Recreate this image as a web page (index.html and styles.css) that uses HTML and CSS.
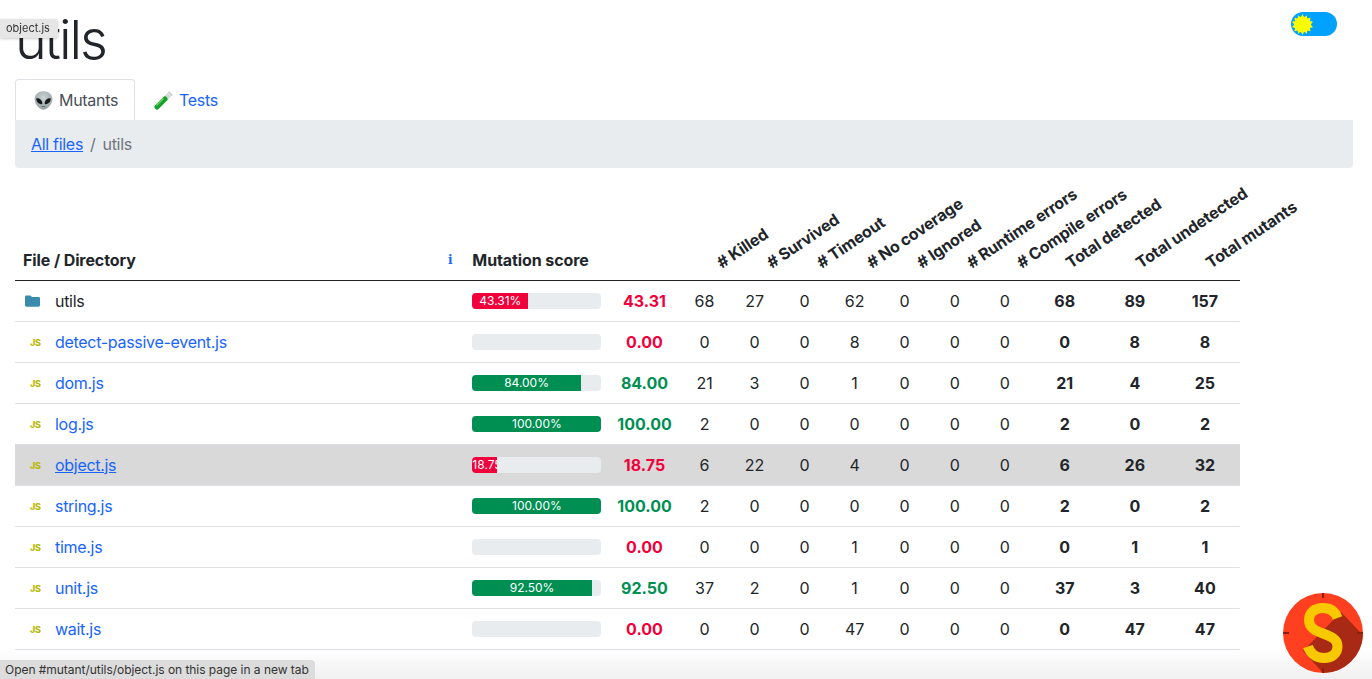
FILE: index.html
```html
<!DOCTYPE html>
<html lang="en">
<head>
<meta charset="utf-8">
<title>utils</title>
<link rel="stylesheet" href="styles.css">
</head>
<body>
<div class="page">
  <header class="top">
    <h1 class="title">utils</h1>
    <div class="toggle">
      <svg class="sun" viewBox="0 0 22 22"><polygon fill="#ffff00" points="11,0 12.8,3.6 15.5,1.2 16,4.8 19.5,3.8 18.6,7.3 22,8 19.6,11 22,14 18.6,14.7 19.5,18.2 16,17.2 15.5,20.8 12.8,18.4 11,22 9.2,18.4 6.5,20.8 6,17.2 2.500,18.2 3.400,14.7 0,14 2.400,11 0,8 3.400,7.300 2.500,3.800 6,4.800 6.500,1.200 9.200,3.600"/><circle cx="11" cy="11" r="8.300" fill="#ffff00"/></svg>
    </div>
  </header>
  <nav class="tabs">
    <a class="tab tab-active">
      <svg class="emoji" viewBox="0 0 18 18"><defs><radialGradient id="head" cx=".5" cy=".35" r=".7"><stop offset="0" stop-color="#cdd3d3"/><stop offset="1" stop-color="#8f9a9c"/></radialGradient></defs><path fill="url(#head)" d="M9 .3c4.800 0 8.400 3.100 8.400 7.400 0 4.500-4.900 10-8.400 10S.6 12.200.6 7.700C.6 3.400 4.200.3 9 .3z"/><path fill="#15181b" d="M2.300 6.900c2.500-.5 5.300 1.500 5.600 4.400.1.800-.4 1.200-1.100 1.200C4.100 12.500 1.700 9.400 2.300 6.900zM15.700 6.900c-2.500-.5-5.300 1.500-5.600 4.400-.1.800.4 1.200 1.100 1.200 2.700 0 5.100-3.100 4.500-5.600z"/><path fill="#4c5457" d="M7.200 14.400h3.600v.7H7.200z"/></svg>
      <span>Mutants</span>
    </a>
    <a class="tab">
      <svg class="emoji" viewBox="0 0 19 19"><path stroke="#d5dcd8" stroke-width="5" stroke-linecap="butt" fill="none" d="M10 9L15.500 3.500"/><path stroke="#14a329" stroke-width="5" stroke-linecap="round" fill="none" d="M3 16L11 8"/><path stroke="#6fd06a" stroke-width="1.300" fill="none" d="M2.500 14.500L9.500 7.500"/><path stroke="#b9c4bf" stroke-width="1.500" fill="none" d="M14.500 .8L18.200 4.500"/></svg>
      <span>Tests</span>
    </a>
  </nav>
  <div class="crumbs"><a class="crumb-link">All files</a><span class="crumb-sep">/</span><span class="crumb-now">utils</span></div>
  <table class="report">
    <colgroup>
      <col class="c-icon"><col class="c-name"><col class="c-info"><col class="c-bar"><col class="c-score">
      <col class="c-n"><col class="c-n"><col class="c-n"><col class="c-n"><col class="c-n"><col class="c-n"><col class="c-n">
      <col class="c-t"><col class="c-t"><col class="c-t">
    </colgroup>
    <thead>
      <tr>
        <th colspan="2" class="h-left">File / Directory</th>
        <th class="h-info"><span class="info">i</span></th>
        <th colspan="2" class="h-left">Mutation score</th>
        <th class="rot"><span># Killed</span></th>
        <th class="rot"><span># Survived</span></th>
        <th class="rot"><span># Timeout</span></th>
        <th class="rot"><span># No coverage</span></th>
        <th class="rot"><span># Ignored</span></th>
        <th class="rot"><span># Runtime errors</span></th>
        <th class="rot"><span># Compile errors</span></th>
        <th class="rot rot-t"><span>Total detected</span></th>
        <th class="rot rot-t"><span>Total undetected</span></th>
        <th class="rot rot-t"><span>Total mutants</span></th>
      </tr>
    </thead>
    <tbody>
      <tr>
        <td class="ic"><svg class="folder" viewBox="0 0 16 14"><path fill="#3a8bad" d="M1.500 1h4.300l1.700 1.800h7c.8 0 1.500.7 1.500 1.500v7.200c0 .8-.7 1.500-1.500 1.500h-13C.7 13 0 12.300 0 11.500v-9C0 1.700.7 1 1.500 1z"/></svg></td>
        <td colspan="2" class="name">utils</td>
        <td><div class="bar"><div class="fill red" style="width:43.31%">43.31%</div></div></td>
        <td class="score red-t">43.31</td>
        <td>68</td><td>27</td><td>0</td><td>62</td><td>0</td><td>0</td><td>0</td>
        <td class="b">68</td><td class="b">89</td><td class="b">157</td>
      </tr>
      <tr>
        <td class="ic"><span class="js">JS</span></td>
        <td colspan="2" class="name"><a>detect-passive-event.js</a></td>
        <td><div class="bar"></div></td>
        <td class="score red-t">0.00</td>
        <td>0</td><td>0</td><td>0</td><td>8</td><td>0</td><td>0</td><td>0</td>
        <td class="b">0</td><td class="b">8</td><td class="b">8</td>
      </tr>
      <tr>
        <td class="ic"><span class="js">JS</span></td>
        <td colspan="2" class="name"><a>dom.js</a></td>
        <td><div class="bar"><div class="fill green" style="width:84%">84.00%</div></div></td>
        <td class="score green-t">84.00</td>
        <td>21</td><td>3</td><td>0</td><td>1</td><td>0</td><td>0</td><td>0</td>
        <td class="b">21</td><td class="b">4</td><td class="b">25</td>
      </tr>
      <tr>
        <td class="ic"><span class="js">JS</span></td>
        <td colspan="2" class="name"><a>log.js</a></td>
        <td><div class="bar"><div class="fill green" style="width:100%">100.00%</div></div></td>
        <td class="score green-t">100.00</td>
        <td>2</td><td>0</td><td>0</td><td>0</td><td>0</td><td>0</td><td>0</td>
        <td class="b">2</td><td class="b">0</td><td class="b">2</td>
      </tr>
      <tr class="hover">
        <td class="ic"><span class="js">JS</span></td>
        <td colspan="2" class="name"><a class="under">object.js</a></td>
        <td><div class="bar"><div class="fill red" style="width:18.75%">18.75%</div></div></td>
        <td class="score red-t">18.75</td>
        <td>6</td><td>22</td><td>0</td><td>4</td><td>0</td><td>0</td><td>0</td>
        <td class="b">6</td><td class="b">26</td><td class="b">32</td>
      </tr>
      <tr>
        <td class="ic"><span class="js">JS</span></td>
        <td colspan="2" class="name"><a>string.js</a></td>
        <td><div class="bar"><div class="fill green" style="width:100%">100.00%</div></div></td>
        <td class="score green-t">100.00</td>
        <td>2</td><td>0</td><td>0</td><td>0</td><td>0</td><td>0</td><td>0</td>
        <td class="b">2</td><td class="b">0</td><td class="b">2</td>
      </tr>
      <tr>
        <td class="ic"><span class="js">JS</span></td>
        <td colspan="2" class="name"><a>time.js</a></td>
        <td><div class="bar"></div></td>
        <td class="score red-t">0.00</td>
        <td>0</td><td>0</td><td>0</td><td>1</td><td>0</td><td>0</td><td>0</td>
        <td class="b">0</td><td class="b">1</td><td class="b">1</td>
      </tr>
      <tr>
        <td class="ic"><span class="js">JS</span></td>
        <td colspan="2" class="name"><a>unit.js</a></td>
        <td><div class="bar"><div class="fill green" style="width:92.5%">92.50%</div></div></td>
        <td class="score green-t">92.50</td>
        <td>37</td><td>2</td><td>0</td><td>1</td><td>0</td><td>0</td><td>0</td>
        <td class="b">37</td><td class="b">3</td><td class="b">40</td>
      </tr>
      <tr>
        <td class="ic"><span class="js">JS</span></td>
        <td colspan="2" class="name"><a>wait.js</a></td>
        <td><div class="bar"></div></td>
        <td class="score red-t">0.00</td>
        <td>0</td><td>0</td><td>0</td><td>47</td><td>0</td><td>0</td><td>0</td>
        <td class="b">0</td><td class="b">47</td><td class="b">47</td>
      </tr>
    </tbody>
  </table>
</div>
<div class="fade"></div>
<div class="tip">object.js</div>
<div class="status">Open #mutant/utils/object.js on this page in a new tab</div>
<svg class="logo" viewBox="0 0 80 80">
  <circle cx="40" cy="40" r="40" fill="#ff4020"/>
  <path fill="#a92a14" d="M58 19L80 42A40 40 0 0 1 40 80L20 58z"/>
  <path fill="#8a1f10" d="M39 0h2v5h-2zM39 75h2v5h-2zM0 39h6v2H0zM74 39h6v2h-6z"/>
  <path fill="none" stroke="#f9c900" stroke-width="10" d="M54.500 25C52 18 47 15 40 15 31 15 26 20 26 27 26 35 33 38 40 40.500 48 43.500 54.500 46 54.500 53.500 54.500 60.500 49 65 41 65 33 65 27 60 25 53.500"/>
</svg>
</body>
</html>
```
FILE: styles.css
```css
* { box-sizing: border-box; }
html, body { margin: 0; height: 679px; overflow: hidden; }
body {
  font-family: Inter, "Liberation Sans", sans-serif;
  font-size: 16px;
  line-height: 24px;
  color: #212529;
  background: #fff;
}
a { color: #1764ff; }
.page { padding: 0 19px 0 15px; }

.top { display: flex; justify-content: space-between; align-items: flex-start; height: 79px; }
.title { margin: 6px 0 0; font-size: 54px; line-height: 67px; font-weight: 300; letter-spacing: -2px; }
.toggle {
  width: 46px; height: 24px; margin: 12px 16px 0 0;
  border-radius: 12px; background: #00a1ff;
  display: flex; align-items: center; padding-left: 1px;
}
.sun { width: 21px; height: 21px; }

.tabs { display: flex; height: 41px; letter-spacing: -.3px; }
.tab {
  display: flex; align-items: center; gap: 6px;
  width: 120px; padding: 0 0 0 18px;
  border: 1px solid transparent; border-bottom: 0;
  border-radius: 4px 4px 0 0;
}
.tab-active { color: #495057; border-color: #dee2e6; background: #fff; }
.emoji { width: 19px; height: 19px; flex: none; }

.crumbs {
  display: flex; height: 48px; align-items: center;
  padding: 0 16px; gap: 7px;
  background: #e9ecef; border-radius: 0 0 4px 4px;
  color: #6c757d; letter-spacing: -.3px;
}
.crumb-link { color: #1764ff; text-decoration: underline; }

.report { margin-top: 0; table-layout: fixed; border-collapse: collapse; width: 1225px; }
.c-icon { width: 32px; }
.c-name { width: 393px; }
.c-info { width: 24px; }
.c-bar { width: 145px; }
.c-score { width: 70px; }
.c-n { width: 50px; }
.c-t { width: 70px; }

thead tr { height: 112px; border-bottom: 1px solid #212529; }
th { vertical-align: bottom; padding: 8px; font-weight: 700; text-align: left; letter-spacing: -.1px; }
.h-info { padding: 0 4px 8px 0; }
.info { display: block; font: 700 12px/24px "DejaVu Serif", serif; color: #1764ff; text-align: center; }
.rot { position: relative; padding: 0; }
.rot span {
  position: absolute; left: 45px; bottom: 6px;
  white-space: nowrap; font-size: 16px;
  transform-origin: left bottom; transform: rotate(-34deg);
}
.rot-t span { left: 44px; }

tbody tr { height: 41px; border-bottom: 1px solid #dee2e6; }
td { padding: 8px; text-align: center; }
.hover { background: #d9d9d9; }
.ic { padding: 0 0 0 10px; text-align: left; }
.name { text-align: left; padding-left: 8px; letter-spacing: -.3px; }
.under { text-decoration: underline; }
.folder { display: block; width: 15px; height: 14px; }
.js { display: block; font-size: 9px; line-height: 14px; font-weight: 800; color: #b8b800; padding: 3px 0 0 5px; letter-spacing: -.2px; }

.bar { height: 16px; background: #e9ecef; border-radius: 4px; overflow: hidden; }
.fill { height: 16px; font-size: 12px; line-height: 15px; color: #fff; text-align: center; white-space: nowrap; overflow: hidden; }
.red { background: #f2003c; }
.green { background: #008f53; }
.score { font-weight: 700; padding-left: 0; padding-right: 0; }
.red-t { color: #f2003c; }
.green-t { color: #008f53; }
.b { font-weight: 700; }

.fade {
  position: fixed; left: 0; right: 0; bottom: 0; height: 30px;
  background: linear-gradient(rgba(230,230,230,0), rgba(230,230,230,.6));
  pointer-events: none;
}
.tip {
  position: fixed; left: 0; top: 19px; width: 58px; height: 19px;
  background: #e6e6e6; border-radius: 0 3px 3px 0;
  box-shadow: 0 1px 3px rgba(0,0,0,.2);
  font-size: 11px; line-height: 19px; padding-left: 6px; color: #333; white-space: nowrap;
}
.status {
  position: fixed; left: 0; bottom: 0; width: 315px; height: 19px;
  background: #dcdcdc; border-radius: 0 4px 0 0;
  font-size: 12px; letter-spacing: -.04px; line-height: 19px; padding-left: 5px; color: #333; white-space: nowrap;
}
.logo { position: fixed; left: 1283px; top: 593px; width: 80px; height: 80px; }
```
